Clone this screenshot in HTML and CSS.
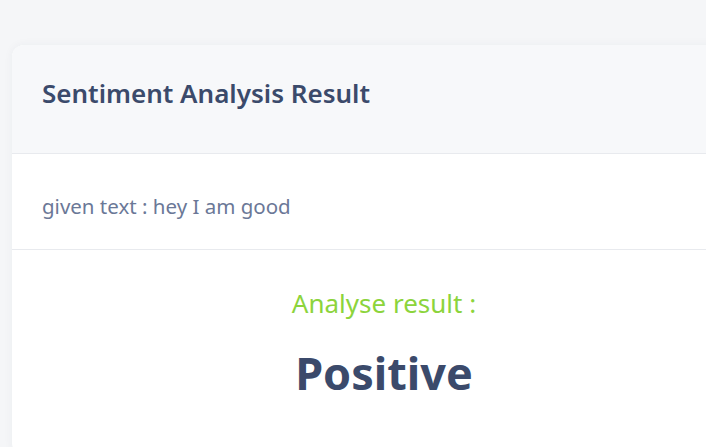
FILE: index.html
```html
<!DOCTYPE html>
<html>
<head>
<meta charset="utf-8">
<link rel="stylesheet" href="styles.css">
</head>
<body>
<div class="page">
  <div class="card">
    <div class="card-header">
      <h1 class="title">Sentiment Analysis Result</h1>
    </div>
    <div class="given">
      <p class="given-text">given text : hey I am good</p>
    </div>
    <div class="result">
      <p class="result-label">Analyse result :</p>
      <p class="result-value">Positive</p>
    </div>
  </div>
</div>
</body>
</html>
```

FILE: styles.css
```css
html, body {
  margin: 0;
  padding: 0;
  background: #f5f6f8;
  overflow: hidden;
  font-family: "Noto Sans", "Open Sans", sans-serif;
}
.page {
  padding: 45px 0 0 12px;
  width: 800px;
}
.card {
  width: 744px;
  background: #ffffff;
  border-radius: 12px;
  box-shadow: 0 0 10px rgba(40, 50, 80, 0.05);
  overflow: hidden;
}
.card-header {
  height: 109px;
  box-sizing: border-box;
  padding: 35px 30px 0;
  background: #f7f8fa;
  border-bottom: 1px solid #e8eaee;
}
.title {
  margin: 0;
  font-size: 26px;
  line-height: 26px;
  font-weight: 600;
  color: #3b4a6b;
}
.given {
  height: 96px;
  box-sizing: border-box;
  padding: 42px 30px 0;
  border-bottom: 1px solid #e8eaee;
}
.given-text {
  margin: 0;
  font-size: 20.5px;
  line-height: 20.5px;
  color: #6b7897;
}
.result {
  display: flex;
  flex-direction: column;
  align-items: center;
  padding: 40px 0 60px;
}
.result-label {
  margin: 0;
  font-size: 26px;
  line-height: 26px;
  color: #8cd43c;
}
.result-value {
  margin: 34px 0 0;
  font-size: 45px;
  line-height: 45px;
  font-weight: 700;
  color: #3b4a6b;
}
```
